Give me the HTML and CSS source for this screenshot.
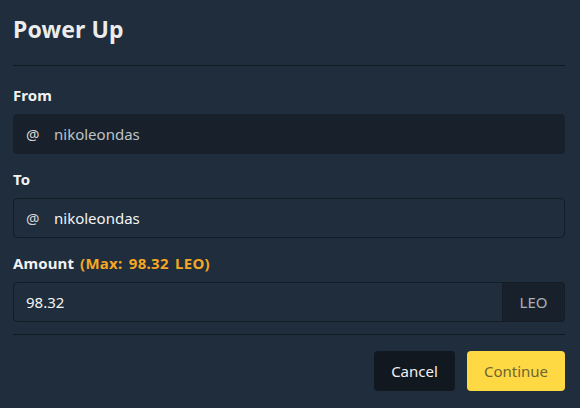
FILE: index.html
```html
<!DOCTYPE html>
<html lang="en">
<head>
<meta charset="utf-8">
<title>Power Up</title>
<link rel="stylesheet" href="styles.css">
</head>
<body>
<div class="modal">
  <div class="header"><h1 class="title">Power Up</h1></div>
  <div class="body">
    <div class="field first">
      <label class="label">From</label>
      <div class="input disabled"><span class="at">@</span><span class="value">nikoleondas</span></div>
    </div>
    <div class="field">
      <label class="label">To</label>
      <div class="input"><span class="at">@</span><span class="value bright">nikoleondas</span></div>
    </div>
    <div class="field">
      <label class="label">Amount <span class="max">(Max: 98.32 LEO)</span></label>
      <div class="group">
        <div class="input grow"><span class="value bright">98.32</span></div>
        <div class="addon">LEO</div>
      </div>
    </div>
  </div>
  <div class="footer">
    <button class="btn cancel">Cancel</button>
    <button class="btn continue">Continue</button>
  </div>
</div>
</body>
</html>
```
FILE: styles.css
```css
* { box-sizing: border-box; }
html, body { margin: 0; padding: 0; }
body {
  background: #1f2d3d;
  font-family: "Noto Sans", "Open Sans", sans-serif;
  color: #f0f0f0;
  width: 580px;
  height: 408px;
  overflow: hidden;
}
.modal { padding: 0 15px 0 13px; }
.header {
  height: 66px;
  border-bottom: 1px solid #111922;
  display: flex;
  align-items: center;
  padding-bottom: 8px;
}
.title {
  margin: 0;
  font-size: 23px;
  font-weight: 700;
  color: #ececec;
  letter-spacing: 0.1px;
}
.body { padding-top: 4px; }
.field { display: flex; flex-direction: column; }
.label {
  margin-top: 14px;
  margin-bottom: 8px;
  line-height: 22px;
  font-size: 15px;
  font-weight: 700;
  color: #f2f2f2;
  letter-spacing: 0.1px;
}
.max { color: #f5a623; margin-left: 2px; word-spacing: 2px; letter-spacing: 0.3px; }
.input {
  height: 40px;
  border: 1px solid #141c25;
  border-radius: 4px;
  display: flex;
  align-items: center;
  padding: 0 12px;
  font-size: 15px;
}
.input.disabled { background: #18212b; border-color: #18212b; }
.at { color: #d6d6d6; width: 28px; font-size: 15px; }
.value { color: #bfc3c7; }
.value.bright { color: #f4f4f4; }
.group { display: flex; }
.group .grow { flex: 1; border-radius: 4px 0 0 4px; }
.addon {
  width: 62px;
  height: 40px;
  background: #18212b;
  border: 1px solid #141c25;
  border-left: none;
  border-radius: 0 4px 4px 0;
  display: flex;
  align-items: center;
  justify-content: center;
  color: #aab0b6;
  font-size: 15px;
}
.footer {
  margin-top: 12px;
  border-top: 1px solid #111922;
  padding-top: 16px;
  display: flex;
  justify-content: flex-end;
  gap: 12px;
}
.btn {
  height: 40px;
  border: none;
  border-radius: 4px;
  font-family: "Noto Sans", "Open Sans", sans-serif;
  font-size: 15px;
  padding: 0;
}
.cancel { width: 81px; background: #111820; color: #f2f2f2; }
.continue { width: 98px; background: #fed943; color: #6e6534; }
```
